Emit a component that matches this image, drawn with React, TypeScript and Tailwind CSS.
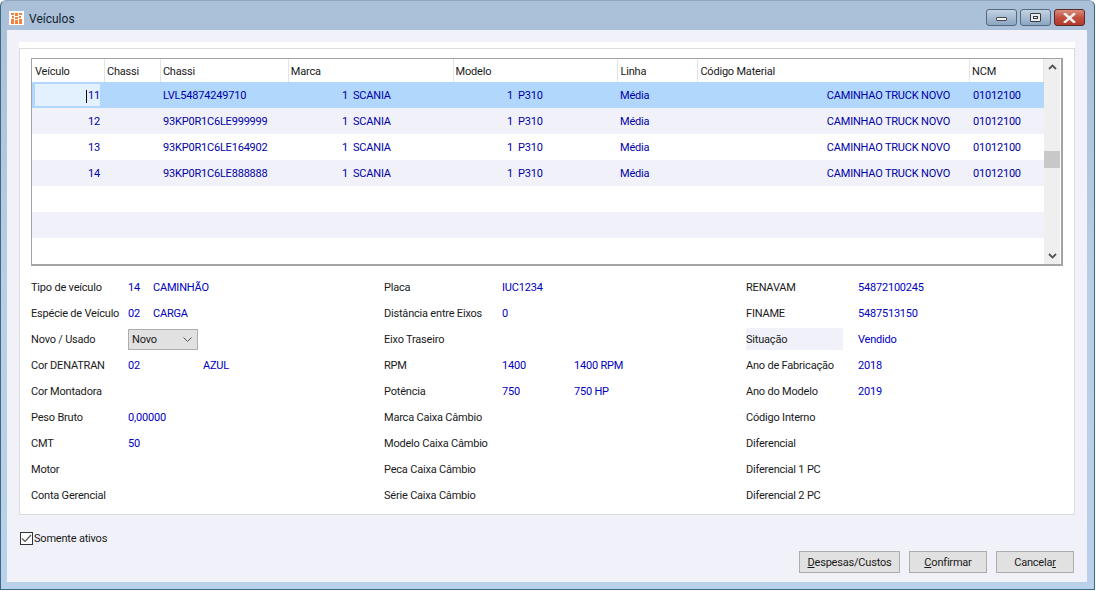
import React from "react";

const headers: [string, number][] = [["Veículo", 73], ["Chassi", 56], ["Chassi", 128], ["Marca", 165], ["Modelo", 165], ["Linha", 80], ["Código Material", 272], ["NCM", 74]];
const rows = [
  ["11", "LVL54874249710"],
  ["12", "93KP0R1C6LE999999"],
  ["13", "93KP0R1C6LE164902"],
  ["14", "93KP0R1C6LE888888"],
];

function Row({ r, i }: { r: string[]; i: number }) {
  const bg = i === 0 ? "bg-[#b1d7fc]" : i % 2 === 1 ? "bg-[#f1f2f9]" : "bg-white";
  return (
    <div className={`relative flex h-[26px] items-center pt-[2px] text-[#0000a8] ${bg}`}>
      {i === 0 && <div className="absolute left-[3px] top-[2px] h-[22px] w-[65px] bg-[#e3f0fe]" />}
      <div className="relative ml-[3px] flex w-[65px] items-center justify-end">
        {i === 0 && <span className="mr-px h-[13px] w-px bg-black" />}
        {r[0]}
      </div>
      <div className="w-[61px]" />
      <div className="w-[128px] pl-[2px]">{r[1]}</div>
      <div className="flex w-[165px] pl-[50px]"><span className="w-[9px] text-right">1</span><span className="ml-[5px]">SCANIA</span></div>
      <div className="flex w-[165px] pl-[50px]"><span className="w-[9px] text-right">1</span><span className="ml-[5px]">P310</span></div>
      <div className="w-[80px] pl-px">Média</div>
      <div className="w-[272px] pr-[21px] text-right">CAMINHAO TRUCK NOVO</div>
      <div className="pl-[2px]">01012100</div>
    </div>
  );
}

function Field({ label, a, b, c, hl, w = [25, 50] }: { label: string; a?: string; b?: string; c?: React.ReactNode; hl?: boolean; w?: number[] }) {
  return (
    <div className="flex h-[26px] items-center">
      <div className="flex w-[97px] shrink-0 items-center text-[#1a1a1a]">
        <div className={`flex h-[22px] w-[97px] items-center whitespace-nowrap pt-[2px] ${hl ? "bg-[#f1f2f9]" : ""}`}>{label}</div>
      </div>
      {c}
      {a && <div className="pt-[2px] text-[#0000c0]" style={{ width: w[0] }}>{a}</div>}
      {b && <div className="pt-[2px] text-[#0000c0]" style={{ width: w[1] }}>{b}</div>}
    </div>
  );
}

function Btn({ w, children }: { w: string; children: React.ReactNode }) {
  return (
    <button className={`flex h-[22px] items-center justify-center border border-[#adadad] bg-[#e1e1e1] pt-[2px] text-[#1a1a1a] ${w}`}>{children}</button>
  );
}

export default function App() {
  return (
    <div className="h-[591px] w-[1096px] overflow-hidden bg-white text-[11px] tracking-[-0.2px] [font-family:Roboto,Tahoma,sans-serif]">
      <div className="flex h-[590px] w-[1095px] flex-col rounded-t-[6px] border border-[#3b6a84] border-t-[#8fa6bd] bg-gradient-to-b from-[#a9c0d8] via-[#b9cfe6] to-[#b9d1ea]">
        <div className="flex h-[29px] shrink-0 items-center pl-[8px] pr-[9px] pt-[5px]">
          <div className="flex h-[14px] w-[15px] items-center justify-center bg-white">
            <svg viewBox="0 0 11 11" width="11" height="11">
              <path d="M0 0h3v2H0zM4 0h3v3H4zM8 0h3v2H8zM1 3h2v2H1zM8 3h2v2H8zM4 4h3v2H4zM0 6h3v5H0zM4 7h3v4H4zM8 6h3v5H8z" fill="#f5813c" />
            </svg>
          </div>
          <span className="ml-[5px] mt-[2px] text-[12px] tracking-normal text-[#10202e]">Veículos</span>
          <div className="ml-auto mt-[3px] flex gap-[3px] self-start">
            <div className="flex h-[17px] w-[31px] items-center justify-center rounded-[3px] border border-[#52697f] bg-gradient-to-b from-[#c3d3e3] via-[#a7bcd2] to-[#8ba6c2]">
              <span className="mt-[3px] h-[4px] w-[11px] rounded-[1px] border border-[#4a4a4a] bg-[#eef1f5]" />
            </div>
            <div className="flex h-[17px] w-[31px] items-center justify-center rounded-[3px] border border-[#52697f] bg-gradient-to-b from-[#c3d3e3] via-[#a7bcd2] to-[#8ba6c2]">
              <span className="flex h-[9px] w-[11px] items-center justify-center rounded-[1px] border border-[#3c3c3c] bg-[#e8ecf2]"><span className="h-[3px] w-[5px] border border-[#3c3c3c]" /></span>
            </div>
            <div className="flex h-[17px] w-[31px] items-center justify-center rounded-[3px] border border-[#5c2a26] bg-gradient-to-b from-[#d98c7e] via-[#c2503f] to-[#b03a2c]">
              <svg viewBox="0 0 13 10" width="13" height="10"><path d="M2 1l9 8M11 1l-9 8" stroke="#f4f0ee" strokeWidth="2.6" strokeLinecap="square" /></svg>
            </div>
          </div>
        </div>

        <div className="mb-[7px] ml-[6px] mr-[7px] flex flex-1 flex-col bg-[#f1f2f9] px-[12px] pt-[12px]">
          <div className="h-[473px] bg-white pt-[6px]">
            <div className="h-[467px] border border-[#dcdcdc] px-[11px] pt-[9px]">
              <div className="h-[208px] w-[1032px] border border-b-2 border-r-2 border-[#a3a3a3] bg-white">
                <div className="flex h-full">
                  <div className="w-[1012px]">
                    <div className="flex h-[23px] text-[#1a1a1a]">
                      {headers.map(([t, w], i) => (
                        <div key={i} className={`flex items-center border-r border-[#e4e4e4] pt-[3px] ${i === 0 ? "pl-[3px]" : "pl-[2px]"}`} style={{ width: w }}>{t}</div>
                      ))}
                    </div>
                    {rows.map((r, i) => <Row key={i} r={r} i={i} />)}
                    <div className="h-[26px]" />
                    <div className="h-[26px] bg-[#f1f2f9]" />
                  </div>
                  <div className="flex w-[16px] flex-col items-center bg-[#efefef] py-[5px]">
                    <svg viewBox="0 0 9 6" width="9" height="6"><path d="M1 5l3.5-3.5L8 5" fill="none" stroke="#555" strokeWidth="1.8" /></svg>
                    <div className="mt-[81px] h-[17px] w-[16px] bg-[#c8c8c8]" />
                    <svg className="mt-auto" viewBox="0 0 9 6" width="9" height="6"><path d="M1 1l3.5 3.5L8 1" fill="none" stroke="#555" strokeWidth="1.8" /></svg>
                  </div>
                </div>
              </div>

              <div className="mt-[8px] flex">
                <div className="w-[353px]">
                  <Field label="Tipo de veículo" a="14" b="CAMINHÃO" />
                  <Field label="Espécie de Veículo" a="02" b="CARGA" />
                  <Field label="Novo / Usado" c={
                    <div className="flex h-[21px] w-[70px] items-center justify-between border border-[#adadad] bg-[#e1e1e1] pl-[3px] pr-[5px] text-[#1a1a1a]">
                      <span className="pt-[2px]">Novo</span>
                      <svg viewBox="0 0 9 5" width="9" height="5"><path d="M0.5 0.5l4 4 4-4" fill="none" stroke="#555" /></svg>
                    </div>
                  } />
                  <Field label="Cor DENATRAN" a="02" b="AZUL" w={[75, 50]} />
                  <Field label="Cor Montadora" />
                  <Field label="Peso Bruto" a="0,00000" w={[60, 0]} />
                  <Field label="CMT" a="50" />
                  <Field label="Motor" />
                  <Field label="Conta Gerencial" />
                </div>
                <div className="w-[362px] [&>div>div:first-child]:w-[118px]">
                  <Field label="Placa" a="IUC1234" w={[72, 0]} />
                  <Field label="Distância entre Eixos" a="0" w={[72, 0]} />
                  <Field label="Eixo Traseiro" />
                  <Field label="RPM" a="1400" b="1400 RPM" w={[72, 70]} />
                  <Field label="Potência" a="750" b="750 HP" w={[72, 70]} />
                  <Field label="Marca Caixa Câmbio" />
                  <Field label="Modelo Caixa Câmbio" />
                  <Field label="Peca Caixa Câmbio" />
                  <Field label="Série Caixa Câmbio" />
                </div>
                <div className="[&>div>div:first-child]:w-[112px]">
                  <Field label="RENAVAM" a="54872100245" w={[80, 0]} />
                  <Field label="FINAME" a="5487513150" w={[80, 0]} />
                  <Field label="Situação" a="Vendido" hl w={[80, 0]} />
                  <Field label="Ano de Fabricação" a="2018" w={[80, 0]} />
                  <Field label="Ano do Modelo" a="2019" w={[80, 0]} />
                  <Field label="Código Interno" />
                  <Field label="Diferencial" />
                  <Field label="Diferencial 1 PC" />
                  <Field label="Diferencial 2 PC" />
                </div>
              </div>
            </div>
          </div>

          <div className="mt-[15px] flex h-[17px] items-center pl-px text-[#1a1a1a]">
            <div className="flex h-[13px] w-[13px] items-center justify-center border border-[#333] bg-white">
              <svg viewBox="0 0 11 9" width="11" height="9"><path d="M1 4.5l3 3L10 1" fill="none" stroke="#555" strokeWidth="1.2" /></svg>
            </div>
            <span className="ml-px pt-[2px]">Somente ativos</span>
          </div>
          <div className="mt-[4px] flex justify-end gap-[9px] pr-px">
            <Btn w="w-[101px]"><span><u>D</u>espesas/Custos</span></Btn>
            <Btn w="w-[78px]"><span><u>C</u>onfirmar</span></Btn>
            <Btn w="w-[78px]"><span>Cancela<u>r</u></span></Btn>
          </div>
        </div>
      </div>
    </div>
  );
}
